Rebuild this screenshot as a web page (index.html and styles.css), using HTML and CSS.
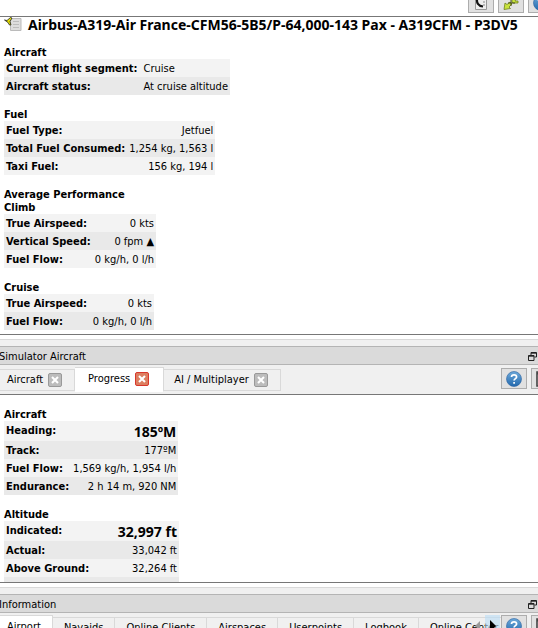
FILE: index.html
```
<!DOCTYPE html>
<html lang="en">
<head>
<meta charset="utf-8">
<title>Simulator Aircraft</title>
<link rel="stylesheet" href="styles.css">
</head>
<body>
<svg class="defs" aria-hidden="true">
  <defs>
    <linearGradient id="blue" x1="0" y1="0" x2="0" y2="1"><stop offset="0" stop-color="#6da9da"/><stop offset="1" stop-color="#2369ad"/></linearGradient>
    <symbol id="help" viewBox="0 0 16 16"><circle cx="8" cy="8" r="7.5" fill="url(#blue)" stroke="#2a62a0" stroke-width=".6"/><path d="M5.5 6C5.5 3.2 10.6 3.2 10.6 6C10.6 7.6 8.1 7.8 8.1 9.6M8.1 11v1.8" fill="none" stroke="#fff" stroke-width="1.7"/></symbol>
    <symbol id="menu" viewBox="0 0 16 16"><path d="M1 1h14v14H1z" fill="#eee" stroke="#444" stroke-width="1.6"/><path d="M1 2.5h14" stroke="#444" stroke-width="2"/><path d="M3 6h3M3 9h3M3 12h3M8 6h5M8 9h5M8 12h5" stroke="#555" stroke-width="1.4"/></symbol>
    <symbol id="float" viewBox="0 0 9 9"><path d="M3 3.5V.5h5.500v4.500H6.500M3 1.200h5.500" fill="none" stroke="#222"/><path d="M.5 3.500h5.500v5H.5zM.5 4.200h5.500" fill="none" stroke="#222"/></symbol>
    <symbol id="cross" viewBox="0 0 14 14"><path d="M3.500 3.500l7 7M10.500 3.500l-7 7" stroke="#fff" stroke-width="2.4"/></symbol>
  </defs>
</svg>

<header class="toolbar">
  <button class="tool" aria-label="Reload"><svg width="16" height="16" viewBox="0 0 16 16"><path d="M2.500 1h11v13.500h-11z" fill="#eee" stroke="#999"/><path d="M10 4h2M10 7h2M10 10h2" stroke="#888"/><path d="M4 3C3.500 8 5 11 10 11.500" fill="none" stroke="#111" stroke-width="2.200"/></svg></button>
  <button class="tool" aria-label="Center aircraft"><svg width="16" height="16" viewBox="0 0 16 16"><path d="M1 14.500l1-6.500 2 1.500L7 7l2 2-3 3 1.500 1.500zM15 1L9 3v4l1 1h5V6h-3z" fill="#c9e33c" stroke="#6f8120" stroke-width=".8"/><path d="M8 5v6M5 8h7" stroke="#465018"/></svg></button>
  <button class="tool" aria-label="Help"><svg width="16" height="16"><use href="#help"/></svg></button>
</header>

<main class="view report">
  <h1><svg width="18" height="16" viewBox="0 0 18 16"><path d="M6.500 1.500H17V13.500H6.500z" fill="#ddd" stroke="#bbb"/><path d="M9 4.500h6M9 7.500h6M9 10.500h6" stroke="#bcbcbc"/><path d="M.5 3L3 3.500 6.500.5 8 1 6 4.500 7 8 5.500 8 4 5.500z" fill="#e6e000" stroke="#222" stroke-width=".8"/></svg>Airbus-A319-Air France-CFM56-5B5/P-64,000-143 Pax - A319CFM - P3DV5</h1>

  <h2>Aircraft</h2>
  <table class="left segment">
    <tr><th scope="row">Current flight segment:</th><td>Cruise</td></tr>
    <tr><th scope="row">Aircraft status:</th><td>At cruise altitude</td></tr>
  </table>

  <h2>Fuel</h2>
  <table class="fuel">
    <tr><th scope="row">Fuel Type:</th><td>Jetfuel</td></tr>
    <tr><th scope="row">Total Fuel Consumed:</th><td>1,254 kg, 1,563 l</td></tr>
    <tr><th scope="row">Taxi Fuel:</th><td>156 kg, 194 l</td></tr>
  </table>

  <h2>Average Performance<br>Climb</h2>
  <table class="phase">
    <tr><th scope="row">True Airspeed:</th><td>0 kts</td></tr>
    <tr><th scope="row">Vertical Speed:</th><td>0 fpm ▲</td></tr>
    <tr><th scope="row">Fuel Flow:</th><td>0 kg/h, 0 l/h</td></tr>
  </table>

  <h2>Cruise</h2>
  <table class="phase">
    <tr><th scope="row">True Airspeed:</th><td>0 kts</td></tr>
    <tr><th scope="row">Fuel Flow:</th><td>0 kg/h, 0 l/h</td></tr>
  </table>
</main>

<div class="splitter"></div>

<section class="dock main-dock">
  <div class="dock-title"><span>Simulator Aircraft</span><button class="float" aria-label="Float"><svg width="9" height="9"><use href="#float"/></svg></button></div>
  <div class="bar">
    <div class="tab"><button class="name">Aircraft</button><button class="close" aria-label="Close Aircraft"><svg width="12" height="12"><use href="#cross"/></svg></button></div>
    <div class="tab active"><button class="name">Progress</button><button class="close" aria-label="Close Progress"><svg width="12" height="12"><use href="#cross"/></svg></button></div>
    <div class="tab"><button class="name">AI / Multiplayer</button><button class="close" aria-label="Close AI / Multiplayer"><svg width="12" height="12"><use href="#cross"/></svg></button></div>
    <div class="corner"><button class="tool" aria-label="Help"><svg width="16" height="16"><use href="#help"/></svg></button><button class="tool" aria-label="Menu"><svg width="16" height="16"><use href="#menu"/></svg></button></div>
  </div>
  <div class="view progress">
    <h2>Aircraft</h2>
    <table class="flight">
      <tr class="big"><th scope="row">Heading:</th><td>185ºM</td></tr>
      <tr><th scope="row">Track:</th><td>177ºM</td></tr>
      <tr><th scope="row">Fuel Flow:</th><td>1,569 kg/h, 1,954 l/h</td></tr>
      <tr><th scope="row">Endurance:</th><td>2 h 14 m, 920 NM</td></tr>
    </table>
    <h2>Altitude</h2>
    <table class="altitude">
      <tr class="big"><th scope="row">Indicated:</th><td>32,997 ft</td></tr>
      <tr><th scope="row">Actual:</th><td>33,042 ft</td></tr>
      <tr><th scope="row">Above Ground:</th><td>32,264 ft</td></tr>
      <tr><th scope="row">Ground Elevation:</th><td>778 ft</td></tr>
    </table>
  </div>
</section>

<div class="splitter"></div>

<section class="dock info-dock">
  <div class="dock-title"><span>Information</span><button class="float" aria-label="Float"><svg width="9" height="9"><use href="#float"/></svg></button></div>
  <div class="bar">
    <div class="tab active"><button class="name">Airport</button></div>
    <div class="tab"><button class="name">Navaids</button></div>
    <div class="tab"><button class="name">Online Clients</button></div>
    <div class="tab"><button class="name">Airspaces</button></div>
    <div class="tab"><button class="name">Userpoints</button></div>
    <div class="tab"><button class="name">Logbook</button></div>
    <div class="tab"><button class="name">Online Center</button></div>
    <div class="corner">
      <button class="scroll" aria-label="Scroll left"><svg width="15" height="20"><path d="M10 5v10L5 10z" fill="#999"/></svg></button>
      <button class="scroll hover" aria-label="Scroll right"><svg width="15" height="20"><path d="M5 4v12l6-6z" fill="#000"/></svg></button>
      <button class="tool" aria-label="Help"><svg width="16" height="16"><use href="#help"/></svg></button><button class="tool" aria-label="Menu"><svg width="16" height="16"><use href="#menu"/></svg></button>
    </div>
  </div>
</section>
</body>
</html>
```
FILE: styles.css
```
* { box-sizing: border-box; }

body {
  margin: 0;
  height: 100vh;
  overflow: hidden;
  display: flex;
  flex-direction: column;
  background: #fff;
  color: #000;
  font: 11px/14px "DejaVu Sans Condensed", "Noto Sans", sans-serif;
}

button {
  margin: 0;
  padding: 0;
  border: 0;
  background: none;
  color: inherit;
  font: inherit;
}

svg { display: block; }
.defs { position: absolute; width: 0; height: 0; }

.tool {
  display: flex;
  align-items: center;
  justify-content: center;
  flex: none;
  width: 26px;
  height: 21px;
  border: 1px solid #adadad;
  background: #e1e1e1;
}

.toolbar {
  flex: none;
  display: flex;
  justify-content: flex-end;
  align-items: flex-end;
  gap: 4px;
  height: 16px;
  padding-bottom: 3px;
  margin-right: -16px;
  overflow: hidden;
}

.view {
  border: solid #777;
  border-width: 1px 0;
  background: #fff;
  padding: 0 4px;
  overflow: hidden;
}

.report { flex: none; padding-bottom: 4px; }

h1, h2 { margin: 0; font-weight: bold; white-space: nowrap; }

h1 {
  display: flex;
  gap: 6px;
  font: bold 14px/16px "Noto Sans", sans-serif;
}

h2 { font-size: 11px; line-height: 13px; margin-top: 13px; }

table { border-collapse: collapse; }
tr { height: 18px; background: #f3f3f3; }
tr:nth-child(even) { background: #e9e9e9; }
th, td { padding: 3px 2px 1px; text-align: right; white-space: nowrap; }
th { text-align: left; }
.left td { text-align: left; }

.segment { width: 226px; }
.segment th { width: 138px; }
.fuel { width: 208px; }
.phase { width: 150px; }
.flight { width: 172px; }
.altitude { width: 175px; }

.big th { vertical-align: top; }
.big td { padding: 2px 2px 1px; font: bold 14px/17px "Noto Sans", sans-serif; }

.splitter { flex: none; height: 4px; background: #fff; }

.dock {
  display: flex;
  flex-direction: column;
  border-top: 1px solid #d9d9d9;
  padding-top: 6px;
  background: #f0f0f0;
}

.main-dock { flex: 1; min-height: 0; }
.info-dock { flex: none; height: 41px; overflow: hidden; }

.dock-title {
  flex: none;
  display: flex;
  justify-content: space-between;
  align-items: center;
  height: 19px;
  margin-left: -1px;
  padding: 2px 1px 0 0;
  border-top: 1px solid #b4b4b4;
  border-bottom: 1px solid #b4b4b4;
  background: #dadada;
}

.bar {
  flex: none;
  display: flex;
  align-items: flex-start;
  height: 29px;
  overflow: hidden;
  position: relative;
}

.tab {
  flex: none;
  display: flex;
  align-items: center;
  gap: 5px;
  height: 22px;
  margin-top: 4px;
  padding: 0 12px;
  border: 1px solid #d9d9d9;
  border-left: 0;
  background: #f0f0f0;
}

.info-dock .tab { padding: 0 11px; }
.bar .tab:first-child { padding-left: 7px; }

.tab.active {
  height: 25px;
  margin-top: 2px;
  padding-bottom: 2px;
  border-bottom-color: #fff;
  background: #fff;
}

.close {
  display: flex;
  align-items: center;
  justify-content: center;
  width: 14px;
  height: 14px;
  border: 1px solid #999;
  border-radius: 2px;
  background: #bcbcbc;
}

.active .close { border-color: #d9372b; background: #dc7e60; }

.main-dock .active { padding-left: 13px; padding-right: 14px; }
.main-dock .tab:nth-child(3) { padding-left: 10px; }

.corner {
  position: absolute;
  top: 3px;
  right: -19px;
  display: flex;
  gap: 4px;
}

.info-dock .corner { top: 2px; }

.scroll { margin-right: -4px; }
.hover { margin-right: -3px; background: rgba(185, 220, 245, .6); }

.progress { flex: 1; min-height: 0; }
```
